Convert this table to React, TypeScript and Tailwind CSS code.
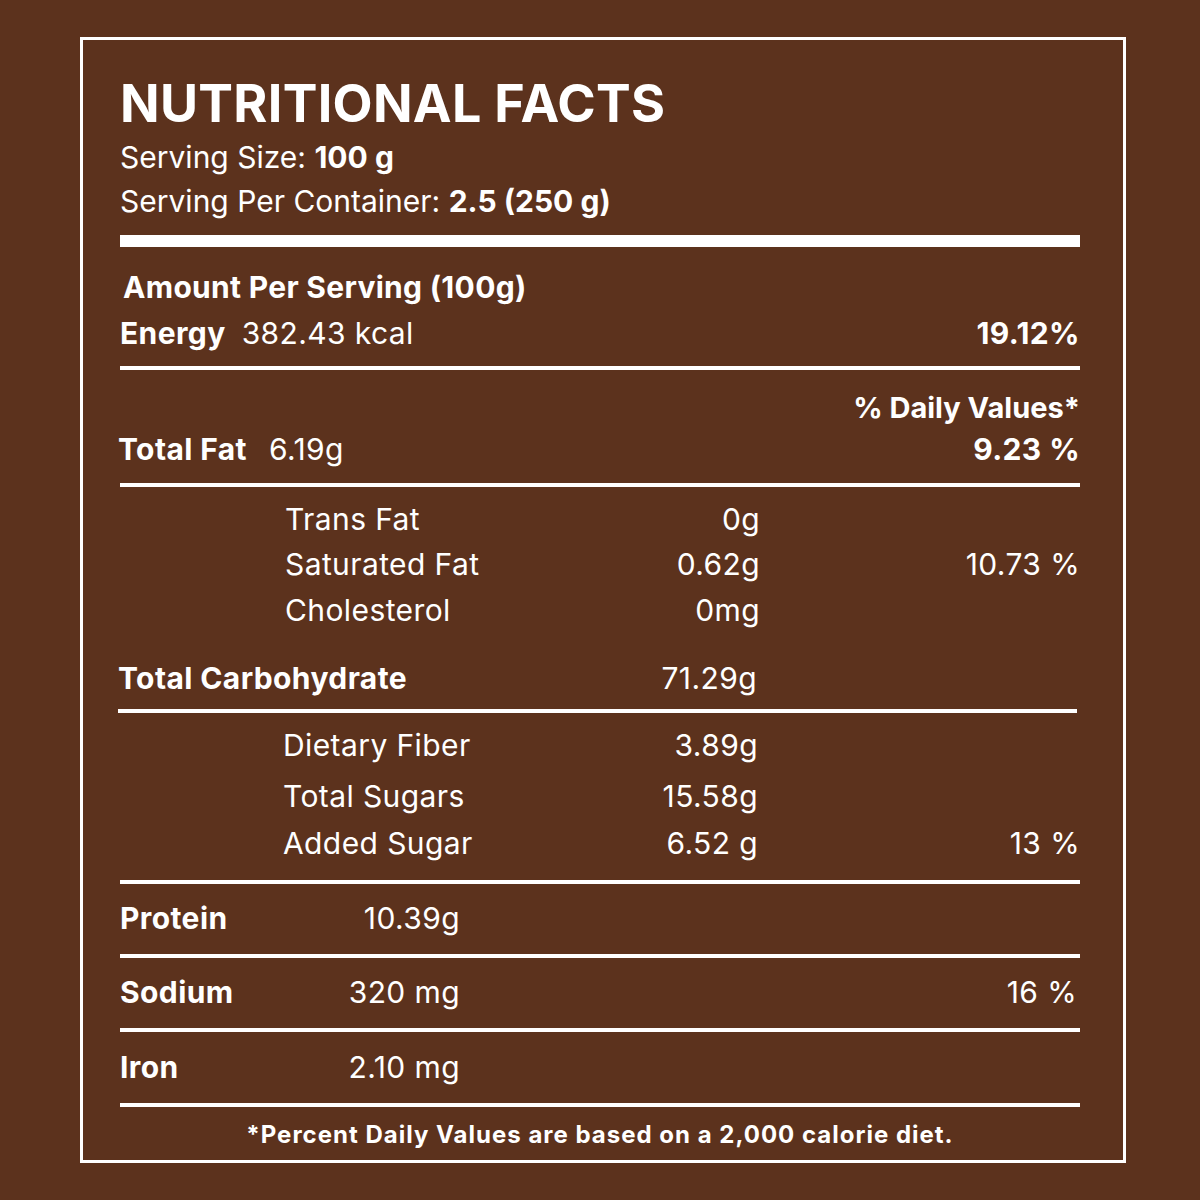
const font = { fontFamily: "Inter, 'Open Sans', sans-serif" };

function Rule({ thick = false }: { thick?: boolean }) {
  return <div className={thick ? "h-[12px] w-full bg-white" : "h-[4px] w-full bg-white"} />;
}

function SubRow({ label, value, pct, cls }: { label: string; value: string; pct?: string; cls: string }) {
  return (
    <div className={`flex items-center text-[30px] tracking-[0.4px] ${cls}`}>
      <div className="w-[165px]" />
      <div className="w-[300px]">{label}</div>
      <div className="w-[175px] text-right">{value}</div>
      <div className="flex-1 text-right">{pct}</div>
    </div>
  );
}

function MainRow({ label, value, pct, cls }: { label: string; value: string; pct?: string; cls: string }) {
  return (
    <div className={`flex items-center text-[30px] tracking-[0.4px] ${cls}`}>
      <div className="w-[200px] font-bold">{label}</div>
      <div className="w-[140px] text-right">{value}</div>
      <div className="flex-1 text-right">{pct}</div>
    </div>
  );
}

export default function App() {
  return (
    <div className="w-[1200px] h-[1200px] bg-[#5c321d] pt-[37px] pl-[80px]" style={font}>
      <div className="w-[1046px] h-[1126px] border-[3px] border-white pl-[37px] pr-[43px] text-white leading-none">
        <h1 className="mt-[38px] h-[52px] text-[52px] font-bold tracking-[0.3px]">NUTRITIONAL FACTS</h1>
        <div className="mt-[5px] h-[44px] flex items-center text-[30px]">
          Serving Size:&nbsp;<b className="font-bold">100 g</b>
        </div>
        <div className="h-[44px] flex items-center text-[30px]">
          Serving Per Container:&nbsp;<b className="font-bold">2.5 (250 g)</b>
        </div>
        <div className="mt-[12px]">
          <Rule thick />
        </div>

        <div className="mt-[17px] h-[46px] flex items-center text-[30px] font-bold tracking-[0.3px] pl-[3px]">
          Amount Per Serving (100g)
        </div>
        <div className="h-[46px] flex items-center text-[30px] tracking-[0.4px]">
          <span className="font-bold">Energy</span>
          <span className="ml-[16px]">382.43 kcal</span>
          <span className="flex-1 text-right font-bold">19.12%</span>
        </div>
        <div className="mt-[10px]">
          <Rule />
        </div>

        <div className="mt-[15px] h-[44px] flex items-center justify-end text-[29px] font-bold">% Daily Values*</div>
        <div className="h-[40px] flex items-center text-[30px] tracking-[0.4px] -ml-[2px]">
          <span className="font-bold">Total Fat</span>
          <span className="ml-[22px]">6.19g</span>
          <span className="flex-1 text-right font-bold">9.23 %</span>
        </div>
        <div className="mt-[14px]">
          <Rule />
        </div>

        <SubRow cls="mt-[10px] h-[44px]" label="Trans Fat" value="0g" />
        <SubRow cls="h-[46px]" label="Saturated Fat" value="0.62g" pct="10.73 %" />
        <SubRow cls="h-[46px]" label="Cholesterol" value="0mg" />

        <div className="mt-[23px] h-[44px] flex items-center text-[30px] tracking-[0.4px] -ml-[2px]">
          <div className="w-[465px] font-bold">Total Carbohydrate</div>
          <div className="w-[174px] text-right">71.29g</div>
        </div>
        <div className="mt-[9px] -ml-[2px] mr-[3px]">
          <Rule />
        </div>

        <SubRow cls="mt-[10px] h-[44px] -ml-[2px] mr-[3px]" label="Dietary Fiber" value="3.89g" />
        <SubRow cls="mt-[7px] h-[44px] -ml-[2px]" label="Total Sugars" value="15.58g" />
        <SubRow cls="mt-[3px] h-[44px] -ml-[2px]" label="Added Sugar" value="6.52 g" pct="13 %" />
        <div className="mt-[15px]">
          <Rule />
        </div>

        <MainRow cls="mt-[12px] h-[44px]" label="Protein" value="10.39g" />
        <div className="mt-[14px]">
          <Rule />
        </div>
        <MainRow cls="mt-[12px] h-[44px] pr-[3px]" label="Sodium" value="320 mg" pct="16 %" />
        <div className="mt-[14px]">
          <Rule />
        </div>
        <MainRow cls="mt-[13px] h-[44px]" label="Iron" value="2.10 mg" />
        <div className="mt-[14px]">
          <Rule />
        </div>

        <div className="mt-[8px] h-[40px] flex items-center justify-center text-[24px] font-bold tracking-[1px]">
          *Percent Daily Values are based on a 2,000 calorie diet.
        </div>
      </div>
    </div>
  );
}
